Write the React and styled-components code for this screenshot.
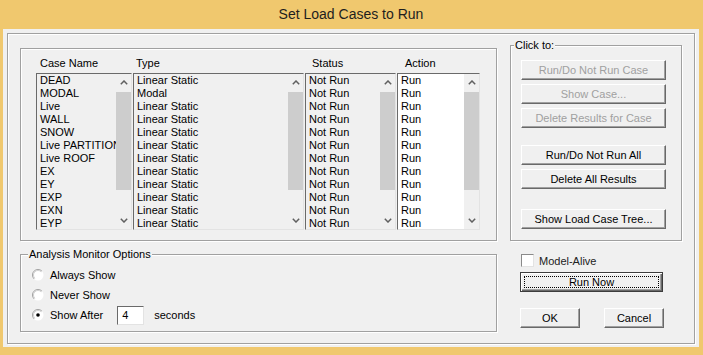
import React from 'react';
import styled, { createGlobalStyle } from 'styled-components';

const GlobalStyle = createGlobalStyle`
  html, body {
    margin: 0;
    padding: 0;
    background: #F0C86E;
  }
  body {
    font-family: "Liberation Sans", Arial, sans-serif;
    font-size: 11px;
    color: #000;
  }
`;

const Window = styled.div`
  width: 703px;
  height: 355px;
  box-sizing: border-box;
  background: #F0C86E;
  padding: 0 4px 8px 3px;
  display: flex;
  flex-direction: column;
`;

const TitleBar = styled.div`
  height: 29px;
  display: flex;
  align-items: center;
  justify-content: center;
  font-size: 14px;
  color: #1E1E1E;
  padding-bottom: 2px;
  box-sizing: border-box;
`;

const Client = styled.div`
  flex: 1;
  display: flex;
  background: #F0F0F0;
  padding: 4px 4px 3px 4px;
`;

const Frame = styled.div`
  flex: 1;
  display: grid;
  grid-template-columns: 477px 172px;
  column-gap: 13px;
  align-items: start;
  padding-left: 12px;
  border: 1px solid #A0A0A0;
  box-shadow: inset 1px 1px 0 #fff, 1px 1px 0 #fff;
`;

const LeftCol = styled.div`
  display: flex;
  flex-direction: column;
  padding-top: 14px;
`;

const RightCol = styled.div`
  display: flex;
  flex-direction: column;
  padding-top: 5px;
`;

const ListGroup = styled.div`
  height: 193px;
  box-sizing: border-box;
  padding: 8px 0 0 15px;
  border: 1px solid #A0A0A0;
  box-shadow: inset 1px 1px 0 #fff, 1px 1px 0 #fff;
`;

const COLS = '96px 171px 91px 83px';

const HeaderRow = styled.div`
  display: grid;
  grid-template-columns: ${COLS};
  column-gap: 1px;
  line-height: 13px;
  margin-bottom: 3px;
`;

const HeaderCell = styled.div`
  padding-left: ${p => p.$indent}px;
`;

const Lists = styled.div`
  display: grid;
  grid-template-columns: ${COLS};
  column-gap: 1px;
`;

const ListBox = styled.div`
  height: 157px;
  box-sizing: border-box;
  display: flex;
  background: ${p => (p.$white ? '#fff' : '#F0F0F0')};
  border: 1px solid;
  border-color: #6A6A6A #E3E3E3 #E3E3E3 #6A6A6A;
`;

const Items = styled.div`
  flex: 1;
  min-width: 0;
  overflow: hidden;
`;

const Item = styled.div`
  height: 13px;
  line-height: 13px;
  padding-left: 3px;
  white-space: nowrap;
  overflow: hidden;
`;

const ScrollBar = styled.div`
  width: 15px;
  display: flex;
  flex-direction: column;
  background: #F0F0F0;
`;

const Arrow = styled.div`
  height: 17px;
  display: flex;
  align-items: center;
  justify-content: center;
`;

const Track = styled.div`
  flex: 1;
  padding-top: 1px;
`;

const Thumb = styled.div`
  height: 98px;
  background: #CDCDCD;
`;

const Group = styled.fieldset`
  margin: ${p => p.$mt || 0}px 0 0 0;
  padding: ${p => p.$pad};
  min-width: 0;
  border: 1px solid #A0A0A0;
  box-shadow: inset 1px 1px 0 #fff, 1px 1px 0 #fff;
`;

const Legend = styled.legend`
  margin-left: ${p => p.$indent}px;
  padding: 0 1px;
  line-height: 12px;
  background: #F0F0F0;
`;

const ButtonStack = styled.div`
  display: flex;
  flex-direction: column;
  align-items: flex-start;
`;

const Button = styled.button`
  width: ${p => p.$w || 145}px;
  height: 20px;
  margin-top: ${p => p.$gap || 0}px;
  box-sizing: border-box;
  padding: 0;
  background: #F0F0F0;
  border: 1px solid;
  border-color: #fff #696969 #696969 #fff;
  box-shadow: inset -1px -1px 0 #A0A0A0;
  font-family: "Liberation Sans", Arial, sans-serif;
  font-size: 11px;
  color: ${p => (p.disabled ? '#A0A0A0' : '#000')};
`;

const DefaultButton = styled.button`
  width: 143px;
  height: 20px;
  box-sizing: border-box;
  padding: 3px;
  display: flex;
  background: #F0F0F0;
  border: 1px solid #3C3C3C;
  box-shadow: inset 1px 1px 0 #fff, inset -1px -1px 0 #696969, inset -2px -2px 0 #A0A0A0;
  font-family: "Liberation Sans", Arial, sans-serif;
  font-size: 11px;
  color: #000;
`;

const FocusRect = styled.span`
  flex: 1;
  display: flex;
  align-items: center;
  justify-content: center;
  border: 1px dotted #000;
`;

const Bottom = styled.div`
  display: flex;
  flex-direction: column;
  padding-left: 10px;
`;

const CheckRow = styled.label`
  display: flex;
  align-items: center;
  gap: 5px;
  height: 13px;
  margin: 13px 0 5px 1px;
  color: #222;
`;

const CheckBox = styled.span`
  width: 13px;
  height: 13px;
  box-sizing: border-box;
  background: #fff;
  border: 1px solid;
  border-color: #8A8A8A #E3E3E3 #E3E3E3 #8A8A8A;
`;

const ButtonRow = styled.div`
  display: flex;
  gap: 24px;
  margin-top: 16px;
`;

const RadioRow = styled.div`
  display: flex;
  align-items: center;
  height: 20px;
`;

const RadioLabel = styled.span`
  margin-left: 6px;
`;

const NumberBox = styled.div`
  width: 27px;
  height: 19px;
  box-sizing: border-box;
  margin: 0 10px 0 14px;
  padding-left: 4px;
  line-height: 17px;
  background: #fff;
  border: 1px solid;
  border-color: #6A6A6A #E3E3E3 #E3E3E3 #6A6A6A;
`;

const Chevron = ({ down }) => (
  <svg width="8" height="5" viewBox="0 0 8 5">
    <path
      d={down ? 'M0.8 0.8 L4 4 L7.2 0.8' : 'M0.8 4.2 L4 1 L7.2 4.2'}
      fill="none"
      stroke="#606060"
      strokeWidth="1.5"
    />
  </svg>
);

const Radio = ({ checked }) => (
  <svg width="12" height="12" viewBox="0 0 12 12">
    <circle cx="6" cy="6" r="5.5" fill="#fff" />
    <path d="M2.1 9.9 A5.5 5.5 0 0 1 9.9 2.1" fill="none" stroke="#A0A0A0" />
    <path d="M2.8 9.2 A4.5 4.5 0 0 1 9.2 2.8" fill="none" stroke="#D0D0D0" />
    {checked && <circle cx="6" cy="6" r="1.8" fill="#000" />}
  </svg>
);

const cases = ['DEAD', 'MODAL', 'Live', 'WALL', 'SNOW', 'Live PARTITION', 'Live ROOF', 'EX', 'EY', 'EXP', 'EXN', 'EYP'];

const columns = [
  { title: 'Case Name', indent: 4, rows: cases },
  { title: 'Type', indent: 3, rows: cases.map(c => (c === 'MODAL' ? 'Modal' : 'Linear Static')) },
  { title: 'Status', indent: 7, rows: cases.map(() => 'Not Run') },
  { title: 'Action', indent: 8, rows: cases.map(() => 'Run'), white: true },
];

const List = ({ rows, white }) => (
  <ListBox $white={white}>
    <Items>
      {rows.map((r, i) => (
        <Item key={i}>{r}</Item>
      ))}
    </Items>
    <ScrollBar>
      <Arrow><Chevron /></Arrow>
      <Track><Thumb /></Track>
      <Arrow><Chevron down /></Arrow>
    </ScrollBar>
  </ListBox>
);

export default function App() {
  return (
    <Window>
      <GlobalStyle />
      <TitleBar>Set Load Cases to Run</TitleBar>
      <Client>
        <Frame>
          <LeftCol>
            <ListGroup>
              <HeaderRow>
                {columns.map(c => (
                  <HeaderCell key={c.title} $indent={c.indent}>{c.title}</HeaderCell>
                ))}
              </HeaderRow>
              <Lists>
                {columns.map(c => (
                  <List key={c.title} rows={c.rows} white={c.white} />
                ))}
              </Lists>
            </ListGroup>

            <Group $mt={7} $pad="5px 0 6px 11px">
              <Legend $indent={-4}>Analysis Monitor Options</Legend>
              <RadioRow>
                <Radio />
                <RadioLabel>Always Show</RadioLabel>
              </RadioRow>
              <RadioRow>
                <Radio />
                <RadioLabel>Never Show</RadioLabel>
              </RadioRow>
              <RadioRow>
                <Radio checked />
                <RadioLabel>Show After</RadioLabel>
                <NumberBox>4</NumberBox>
                <span>seconds</span>
              </RadioRow>
            </Group>
          </LeftCol>

          <RightCol>
            <Group $pad="9px 0 11px 10px">
              <Legend $indent={-7}>Click to:</Legend>
              <ButtonStack>
                <Button disabled>Run/Do Not Run Case</Button>
                <Button disabled $gap={4}>Show Case...</Button>
                <Button disabled $gap={4}>Delete Results for Case</Button>
                <Button $gap={17}>Run/Do Not Run All</Button>
                <Button $gap={4}>Delete All Results</Button>
                <Button $gap={20}>Show Load Case Tree...</Button>
              </ButtonStack>
            </Group>
            <Bottom>
              <CheckRow>
                <CheckBox />
                Model-Alive
              </CheckRow>
              <DefaultButton>
                <FocusRect>Run Now</FocusRect>
              </DefaultButton>
              <ButtonRow>
                <Button $w={60}>OK</Button>
                <Button $w={60}>Cancel</Button>
              </ButtonRow>
            </Bottom>
          </RightCol>
        </Frame>
      </Client>
    </Window>
  );
}
